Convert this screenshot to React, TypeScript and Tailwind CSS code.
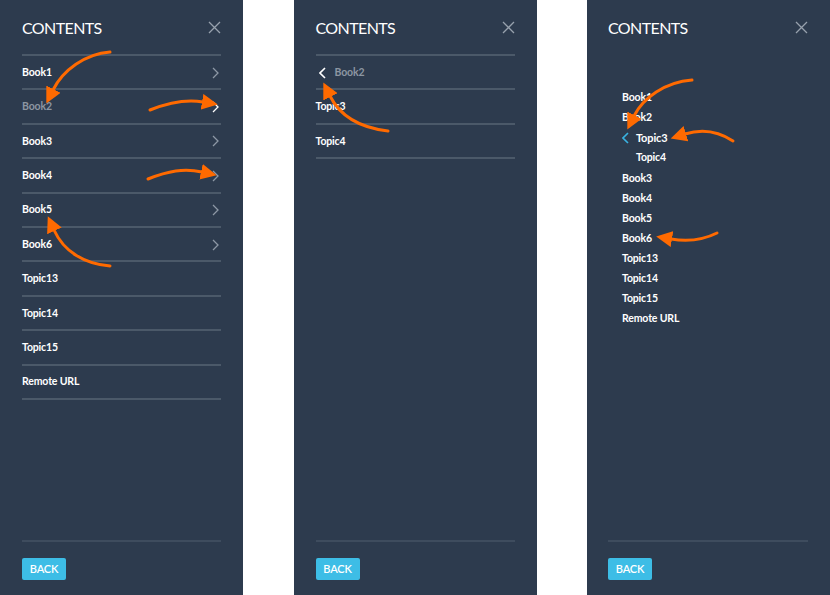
import React from 'react';

const font = { fontFamily: '"Lato", "Open Sans", sans-serif' };

function CloseIcon() {
    return (
        <svg width="13" height="13" viewBox="0 0 13 13" className="mt-[3px]">
            <path d="M1 1 L12 12 M12 1 L1 12" stroke="#97a1ad" strokeWidth="1.3" fill="none" />
        </svg>
    );
}

function ChevronRight({ white }: { white?: boolean }) {
    return (
        <svg width="7" height="12" viewBox="0 0 7 12" className="mr-[2px]">
            <path d="M1 1 L6 6 L1 11" stroke={white ? '#ffffff' : '#8d98a5'} strokeWidth="1.3" fill="none" />
        </svg>
    );
}

function ChevronLeft({ color }: { color: string }) {
    return (
        <svg width="7" height="12" viewBox="0 0 7 12">
            <path d="M6 1 L1 6 L6 11" stroke={color} strokeWidth="1.6" fill="none" />
        </svg>
    );
}

function Header() {
    return (
        <div className="flex items-start justify-between pt-[18px] h-[54px]">
            <span className="text-[16px] leading-[20px] text-white tracking-[-0.6px]">CONTENTS</span>
            <CloseIcon />
        </div>
    );
}

function Footer() {
    return (
        <div className="mt-auto border-t-2 border-[#3e4c5e] pt-[13px] pb-[15px]">
            <button className="w-[44px] h-[22px] rounded-[2px] bg-[#3dbde6] text-white text-[11px] font-semibold tracking-[-0.2px]">
                BACK
            </button>
        </div>
    );
}

type Row = { label: string; chevron?: boolean; white?: boolean; dim?: boolean };

const firstList: Row[] = [
    { label: 'Book1', chevron: true },
    { label: 'Book2', chevron: true, white: true, dim: true },
    { label: 'Book3', chevron: true },
    { label: 'Book4', chevron: true },
    { label: 'Book5', chevron: true },
    { label: 'Book6', chevron: true },
    { label: 'Topic13' },
    { label: 'Topic14' },
    { label: 'Topic15' },
    { label: 'Remote URL' },
];

const treeList = ['Book3', 'Book4', 'Book5', 'Book6', 'Topic13', 'Topic14', 'Topic15', 'Remote URL'];

const item = 'text-[10.5px] tracking-[-0.15px] font-bold';

function Panel({ children, inset }: { children: React.ReactNode; inset: string }) {
    return (
        <div className={`w-[243px] h-[595px] bg-[#2d3b4e] flex flex-col ${inset}`} style={font}>
            {children}
        </div>
    );
}

export default function App() {
    return (
        <div className="relative w-[830px] h-[595px] bg-white flex justify-between">
            {/* Panel 1: top level list */}
            <Panel inset="pl-[22px] pr-[22px]">
                <Header />
                <div className="border-t-2 border-[#4b5969]">
                    {firstList.map((row) => (
                        <div key={row.label} className="h-[34.4px] border-b-2 border-[#4b5969] flex items-center justify-between pt-[1px]">
                            <span className={`${item} ${row.dim ? 'text-[#8c96a2]' : 'text-white'}`}>{row.label}</span>
                            {row.chevron && <ChevronRight white={row.white} />}
                        </div>
                    ))}
                </div>
                <Footer />
            </Panel>

            {/* Panel 2: drilled into Book2 */}
            <Panel inset="pl-[22px] pr-[22px]">
                <Header />
                <div className="border-t-2 border-[#4b5969]">
                    <div className="h-[34.4px] border-b-2 border-[#4b5969] flex items-center gap-[9px] pl-[3px] pt-[1px]">
                        <ChevronLeft color="#ffffff" />
                        <span className={`${item} text-[#8c96a2]`}>Book2</span>
                    </div>
                    <div className="h-[34.4px] border-b-2 border-[#4b5969] flex items-center pt-[1px]">
                        <span className={`${item} font-black text-white`}>Topic3</span>
                    </div>
                    <div className="h-[34.4px] border-b-2 border-[#4b5969] flex items-center pt-[1px]">
                        <span className={`${item} text-white`}>Topic4</span>
                    </div>
                </div>
                <Footer />
            </Panel>

            {/* Panel 3: tree view */}
            <Panel inset="pl-[21px] pr-[22px]">
                <Header />
                <div className="pt-[34px] pl-[14px] flex flex-col">
                    <div className={`h-[20.1px] flex items-center ${item} text-white`}>Book1</div>
                    <div className={`h-[20.1px] flex items-center ${item} text-white`}>Book2</div>
                    <div className={`h-[20.1px] flex items-center gap-[7px] ${item} font-black text-white`}>
                        <ChevronLeft color="#39b3e2" />
                        <span className="text-[11px]">Topic3</span>
                    </div>
                    <div className={`h-[20.1px] flex items-center pl-[14px] ${item} text-white`}>Topic4</div>
                    {treeList.map((label) => (
                        <div key={label} className={`h-[20.1px] flex items-center ${item} text-white`}>{label}</div>
                    ))}
                </div>
                <Footer />
            </Panel>

            {/* Orange annotation arrows */}
            <svg className="absolute inset-0 pointer-events-none" width="830" height="595" viewBox="0 0 830 595">
                <defs>
                    <marker id="ah" markerWidth="18" markerHeight="16" refX="1" refY="8" orient="auto" markerUnits="userSpaceOnUse">
                        <path d="M0 0 L16 8 L0 16 Z" fill="#ff6a00" />
                    </marker>
                </defs>
                <g stroke="#ff6a00" strokeWidth="3" fill="none" strokeLinecap="round" markerEnd="url(#ah)">
                    <path d="M110 52 C 85 54, 63 70, 53 90" />
                    <path d="M150 110 C 170 102, 186 99, 203 102" />
                    <path d="M148 179 C 168 171, 184 168, 202 172" />
                    <path d="M110 266 C 85 264, 64 252, 54 230" />
                    <path d="M388 131 C 362 128, 341 118, 330 96" />
                    <path d="M692 80 C 665 82, 643 98, 634 116" />
                    <path d="M733 141 C 718 131, 701 129, 685 134" />
                    <path d="M717 233 C 703 240, 689 242, 671 239" />
                </g>
            </svg>
        </div>
    );
}
